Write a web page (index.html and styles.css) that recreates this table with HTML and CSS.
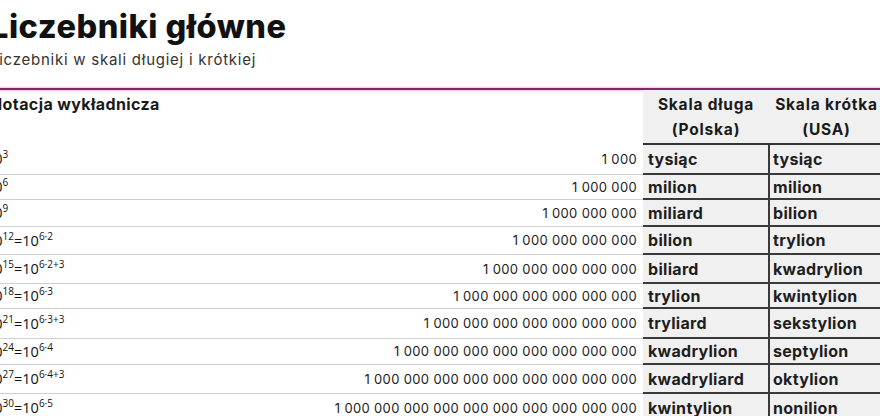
FILE: index.html
```html
<!DOCTYPE html>
<html lang="pl">
<head>
<meta charset="utf-8">
<title>Liczebniki główne</title>
<link rel="stylesheet" href="styles.css">
</head>
<body>
<div class="page">
  <h1 class="title">Liczebniki główne</h1>
  <p class="subtitle">Liczebniki w skali długiej i krótkiej</p>
  <div class="rule"></div>
  <table class="nums">
    <thead>
      <tr>
        <th class="c-not">Notacja wykładnicza</th>
        <th class="c-num"></th>
        <th class="c-long">Skala długa<br>(Polska)</th>
        <th class="c-short">Skala krótka<br>(USA)</th>
      </tr>
    </thead>
    <tbody>
      <tr><td class="c-not">10<sup>3</sup></td><td class="c-num">1 000</td><td class="c-long">tysiąc</td><td class="c-short">tysiąc</td></tr>
      <tr><td class="c-not">10<sup>6</sup></td><td class="c-num">1 000 000</td><td class="c-long">milion</td><td class="c-short">milion</td></tr>
      <tr><td class="c-not">10<sup>9</sup></td><td class="c-num">1 000 000 000</td><td class="c-long">miliard</td><td class="c-short">bilion</td></tr>
      <tr><td class="c-not">10<sup>12</sup>=10<sup>6·2</sup></td><td class="c-num">1 000 000 000 000</td><td class="c-long">bilion</td><td class="c-short">trylion</td></tr>
      <tr><td class="c-not">10<sup>15</sup>=10<sup>6·2+3</sup></td><td class="c-num">1 000 000 000 000 000</td><td class="c-long">biliard</td><td class="c-short">kwadrylion</td></tr>
      <tr><td class="c-not">10<sup>18</sup>=10<sup>6·3</sup></td><td class="c-num">1 000 000 000 000 000 000</td><td class="c-long">trylion</td><td class="c-short">kwintylion</td></tr>
      <tr><td class="c-not">10<sup>21</sup>=10<sup>6·3+3</sup></td><td class="c-num">1 000 000 000 000 000 000 000</td><td class="c-long">tryliard</td><td class="c-short">sekstylion</td></tr>
      <tr><td class="c-not">10<sup>24</sup>=10<sup>6·4</sup></td><td class="c-num">1 000 000 000 000 000 000 000 000</td><td class="c-long">kwadrylion</td><td class="c-short">septylion</td></tr>
      <tr><td class="c-not">10<sup>27</sup>=10<sup>6·4+3</sup></td><td class="c-num">1 000 000 000 000 000 000 000 000 000</td><td class="c-long">kwadryliard</td><td class="c-short">oktylion</td></tr>
      <tr><td class="c-not">10<sup>30</sup>=10<sup>6·5</sup></td><td class="c-num">1 000 000 000 000 000 000 000 000 000 000</td><td class="c-long">kwintylion</td><td class="c-short">nonilion</td></tr>
    </tbody>
  </table>
</div>
</body>
</html>
```
FILE: styles.css
```css
html, body {
  margin: 0;
  padding: 0;
  background: #ffffff;
  overflow: hidden;
}

.page {
  margin-left: -10px;
  width: 894px;
  font-family: Inter, "Noto Sans", sans-serif;
  color: #1a1a1a;
}

.title {
  margin: 0;
  padding-top: 8px;
  font-size: 32.5px;
  line-height: 38px;
  font-weight: 800;
  letter-spacing: 0.5px;
  color: #111;
}

.subtitle {
  margin: 4px 0 0 0;
  font-size: 15px;
  line-height: 20px;
  letter-spacing: 0.75px;
  color: #333;
}

.rule {
  margin-top: 18px;
  height: 2px;
  background: #7f2a66;
  box-shadow: 0 0 2px 1px #f4bfdc;
}

.nums {
  width: 100%;
  border-collapse: collapse;
  table-layout: fixed;
}

.nums th {
  font-weight: 700;
  font-size: 15.5px;
  line-height: 25px;
  letter-spacing: 0.8px;
  vertical-align: top;
  padding: 2px 0 1px 0;
  color: #1a1a1a;
}

.nums th.c-not {
  text-align: left;
  font-size: 16px;
  letter-spacing: 0.4px;
  width: 280px;
  white-space: nowrap;
}

.nums th.c-num {
  width: 373px;
}

.nums th.c-long {
  width: 126px;
  text-align: center;
  background: #f0f0f0;
  border-bottom: 2px solid #333;
}

.nums th.c-short {
  text-align: center;
  background: #f0f0f0;
  border-bottom: 2px solid #333;
}

.nums td {
  padding: 0;
  height: 27px;
}

.nums td.c-not {
  font-family: "Open Sans", "Liberation Sans", sans-serif;
  font-size: 14.5px;
  color: #111;
  text-indent: -4px;
  border-bottom: 1px solid #cfcfcf;
  white-space: nowrap;
  vertical-align: middle;
}

.nums td.c-not sup {
  font-size: 10px;
  line-height: 0;
}

.nums td.c-num {
  text-align: right;
  padding-right: 6px;
  font-size: 13px;
  letter-spacing: 0.35px;
  color: #222;
  border-bottom: 1px solid #cfcfcf;
  white-space: nowrap;
  vertical-align: middle;
}

.nums td.c-long,
.nums td.c-short {
  background: #f0f0f0;
  font-weight: 700;
  font-size: 16px;
  letter-spacing: 0.3px;
  color: #1e1e1e;
  border-bottom: 2px solid #3a3a3a;
  padding-left: 5px;
  vertical-align: middle;
}

.nums td.c-short {
  border-left: 2px solid #3a3a3a;
  padding-left: 3px;
}

.nums tbody tr:nth-child(1) td { height: 28px; }
.nums tbody tr:nth-child(2) td { height: 23px; }
.nums tbody tr:nth-child(3) td { height: 25px; }
.nums tbody tr:nth-child(4) td { height: 26px; }
.nums tbody tr:nth-child(5) td { height: 27px; }
.nums tbody tr:nth-child(6) td { height: 23px; }
.nums tbody tr:nth-child(7) td { height: 28px; }
.nums tbody tr:nth-child(8) td { height: 24px; }
.nums tbody tr:nth-child(9) td { height: 27px; }
```
